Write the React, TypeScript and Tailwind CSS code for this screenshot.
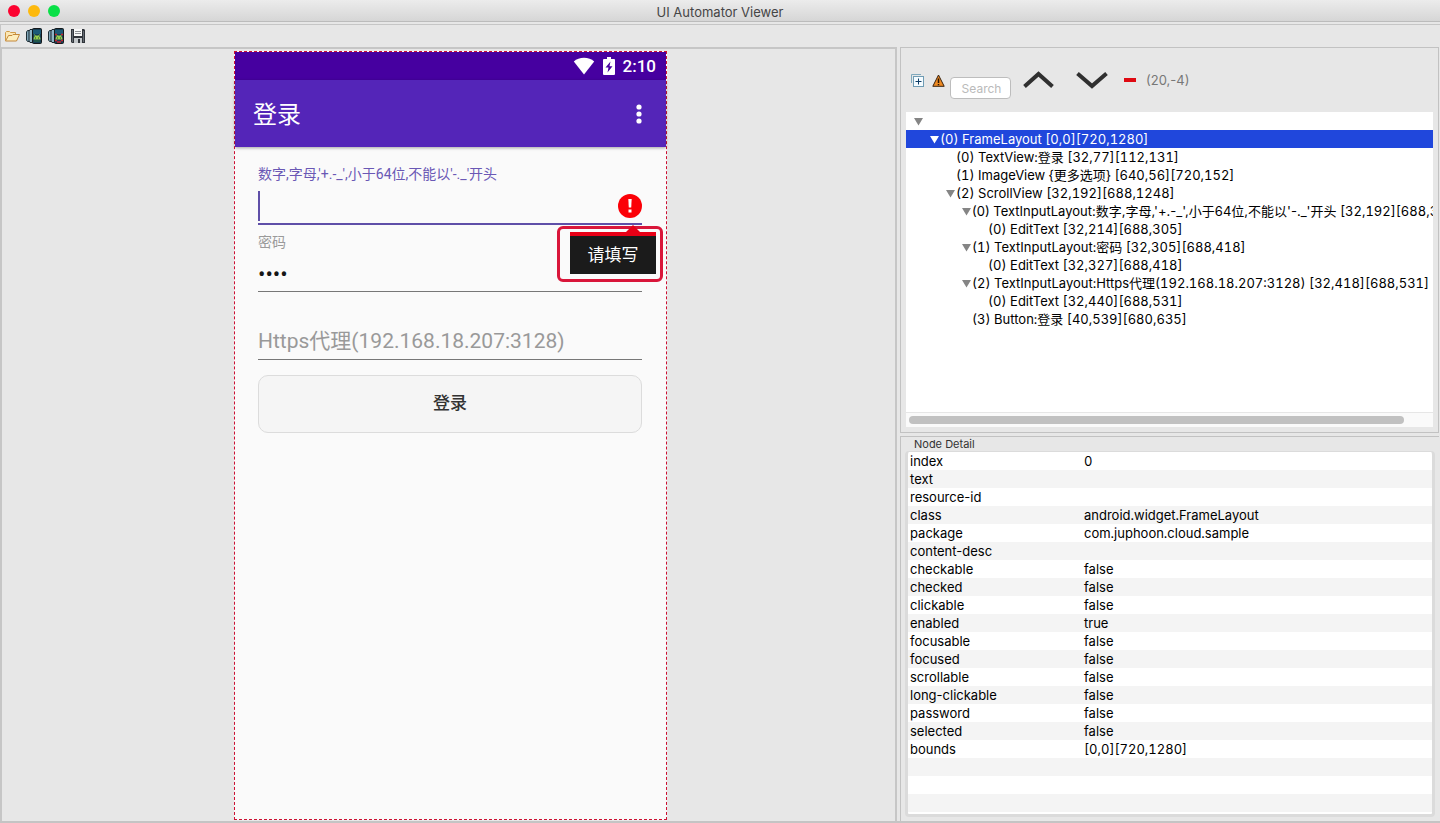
import React from "react";

type TreeNode = {
  name: string;
  bounds: string;
  pad: string;
  open?: boolean;
  selected?: boolean;
  proportional?: boolean;
};

const nodes: TreeNode[] = [
  { name: "", bounds: "", pad: "pl-2", open: true },
  { name: "(0) FrameLayout", bounds: "[0,0][720,1280]", pad: "pl-6", open: true, selected: true },
  { name: "(0) TextView:登录", bounds: "[32,77][112,131]", pad: "pl-10" },
  { name: "(1) ImageView {更多选项}", bounds: "[640,56][720,152]", pad: "pl-10" },
  { name: "(2) ScrollView", bounds: "[32,192][688,1248]", pad: "pl-10", open: true },
  {
    name: "(0) TextInputLayout:数字,字母,'+.-_',小于64位,不能以'-._'开头",
    bounds: "[32,192][688,305]",
    pad: "pl-14",
    open: true,
    proportional: true,
  },
  { name: "(0) EditText", bounds: "[32,214][688,305]", pad: "pl-18" },
  { name: "(1) TextInputLayout:密码", bounds: "[32,305][688,418]", pad: "pl-14", open: true },
  { name: "(0) EditText", bounds: "[32,327][688,418]", pad: "pl-18" },
  { name: "(2) TextInputLayout:Https代理(192.168.18.207:3128)", bounds: "[32,418][688,531]", pad: "pl-14", open: true },
  { name: "(0) EditText", bounds: "[32,440][688,531]", pad: "pl-18" },
  { name: "(3) Button:登录", bounds: "[40,539][680,635]", pad: "pl-14" },
];

const details: [string, string][] = [
  ["index", "0"],
  ["text", ""],
  ["resource-id", ""],
  ["class", "android.widget.FrameLayout"],
  ["package", "com.juphoon.cloud.sample"],
  ["content-desc", ""],
  ["checkable", "false"],
  ["checked", "false"],
  ["clickable", "false"],
  ["enabled", "true"],
  ["focusable", "false"],
  ["focused", "false"],
  ["scrollable", "false"],
  ["long-clickable", "false"],
  ["password", "false"],
  ["selected", "false"],
  ["bounds", "[0,0][720,1280]"],
  ["", ""],
  ["", ""],
  ["", ""],
];

function FolderIcon() {
  return (
    <svg width="16" height="16" viewBox="0 0 16 16">
      <path d="M1.500 12.500V4.500L2.500 3.500H5.500L6.500 4.500H11.500V7" fill="#fbe7b4" stroke="#d09c48" />
      <path d="M1.500 13L4.500 7.500H8L9 6.500H15.500L12.500 13Z" fill="#fdeebd" stroke="#c4883a" strokeLinejoin="round" />
    </svg>
  );
}

function DeviceIcon({ compressed }: { compressed?: boolean }) {
  return (
    <svg width="16" height="16" viewBox="0 0 16 16">
      <path d="M1.500 2.500H4V13.500H1.500L.5 12V4Z" fill="#7fa6b8" stroke="#203038" />
      <path d="M4 1.500H6.500V14.500H4L3 13V3Z" fill="#8db4c6" stroke="#18262e" />
      <rect x="6.500" y=".5" width="9" height="15" rx="1" fill="#173f55" stroke="#15191b" />
      <path d="M7 2H15V6H7Z" fill="#1c5b78" />
      <path d="M7.500 11.500A3.500 4 0 0 1 14.500 11.500Z" fill="#96cf4d" />
      <path d="M8.500 6.500L10 9M13.500 6.500L12 9" stroke="#96cf4d" />
      <path d="M9 10H10M12 10H13" stroke="#24452c" />
      {compressed ? (
        <path d="M7 6.500H9M13 6.500H15M7 12.500H9M13 12.500H15M9 14H13" stroke="#c72532" strokeWidth="1.500" />
      ) : (
        <path d="M8 13H14" stroke="#28733f" />
      )}
    </svg>
  );
}

function SaveIcon() {
  return (
    <svg width="16" height="16" viewBox="0 0 16 16">
      <path d="M1 1H14L15 2V15H2L1 14Z" fill="#30343a" />
      <path d="M2.500 2V14M13.500 3V14" stroke="#656b72" />
      <path d="M4 1H12V8H4Z" fill="#f8f8f8" />
      <path d="M5 3.500H11M5 5.500H11" stroke="#8d9094" />
      <path d="M4 10H12V15H4Z" fill="#c3c7ca" />
      <path d="M8 11H10V15H8Z" fill="#30343a" />
    </svg>
  );
}

function Toggle({ selected }: { selected?: boolean }) {
  return (
    <svg width="9" height="8" viewBox="0 0 9 8" className="shrink-0">
      <path d="M0 0H9L4.500 7.500Z" fill={selected ? "#ffffff" : "#858585"} />
    </svg>
  );
}

function PhoneScreen() {
  return (
    <section
      aria-label="Device screenshot"
      className="flex w-[433px] flex-col border border-dashed border-[#cc1133] bg-[#fafafa] font-[Roboto,'Noto_Sans_CJK_SC',sans-serif]"
    >
      <div className="flex h-7 shrink-0 items-center justify-end bg-[#4600a0] pr-2.5 text-white">
        <svg width="22" height="18" viewBox="0 0 22 18">
          <path d="M11 17.500L.8 4.400C3.500 2 7 .7 11 .7S18.500 2 21.200 4.400Z" fill="#fff" />
        </svg>
        <svg width="12" height="18" viewBox="0 0 12 18" className="ml-2">
          <path d="M4 0H8V2H11Q12 2 12 3V17Q12 18 11 18H1Q0 18 0 17V3Q0 2 1 2H4Z" fill="#fff" />
          <path d="M7.500 4.500L2.500 10.500H5.500L4.500 15.500L9.500 9.200H6.500Z" fill="#4600a0" />
        </svg>
        <span className="ml-2 pt-0.5 text-[17px] font-medium">2:10</span>
      </div>
      <header className="flex h-[67px] shrink-0 items-center justify-between bg-[#5425b8] pr-5 pl-[18px] text-white shadow-[0_1px_3px_rgba(0,0,0,0.35)]">
        <h1 className="pt-0.5 text-2xl">登录</h1>
        <button type="button" aria-label="更多选项">
          <svg width="14" height="22" viewBox="0 0 14 22">
            <circle cx="7" cy="4" r="2.600" fill="#fff" />
            <circle cx="7" cy="11" r="2.600" fill="#fff" />
            <circle cx="7" cy="18" r="2.600" fill="#fff" />
          </svg>
        </button>
      </header>
      <form className="flex flex-col pt-4 pr-6 pl-[23px]" onSubmit={(e) => e.preventDefault()}>
        <label htmlFor="account" className="h-[22px] text-sm leading-[22px] whitespace-nowrap text-[#6a58b5]">
          数字,字母,'+.-_',小于64位,不能以'-._'开头
        </label>
        <div className="relative flex h-10 items-center border-b-2 border-[#5f4fa8] pt-1">
          <span className="h-[30px] w-0.5 bg-[#5f4fa8]" />
          <input id="account" className="min-w-0 flex-1 bg-transparent text-[21px] outline-none" />
          <svg width="24" height="24" viewBox="0 0 24 24">
            <circle cx="12" cy="12" r="12" fill="#fb0007" />
            <path d="M10.300 5H13.700L13.200 13.500H10.800Z" fill="#fff" />
            <rect x="10.500" y="15.500" width="3" height="3" fill="#fff" />
          </svg>
          <div className="absolute top-[41px] -right-[21px] rounded-md border-[3px] border-[#d9163a] bg-[#fafafa] pt-[3px] pr-1 pb-[5px] pl-[10px]">
            <svg width="14" height="7" viewBox="0 0 14 7" className="absolute -top-1 right-5">
              <path d="M7 0L14 7H0Z" fill="#e80016" />
            </svg>
            <p className="w-[86px] border-t-4 border-[#e80016] bg-[#1b1b1b] text-center text-[17px] leading-[38px] text-white">
              请填写
            </p>
          </div>
        </div>
        <label htmlFor="secret" className="mt-1.5 h-[22px] text-sm leading-[22px] text-[#9a9a9a]">
          密码
        </label>
        <input
          id="secret"
          type="password"
          defaultValue="1234"
          className="h-[39px] border-b border-[#777] bg-transparent pt-1 text-[22px] text-[#161616] outline-none"
        />
        <input
          aria-label="Https代理"
          placeholder="Https代理(192.168.18.207:3128)"
          className="mt-7 h-10 border-b border-[#777] bg-transparent pt-0.5 text-[21px] outline-none placeholder:text-[#999]"
        />
        <button
          type="submit"
          className="mt-[15px] h-[58px] rounded-[10px] border border-[#dcdcdc] bg-[#f5f5f5] text-[17px] font-medium text-[#333]"
        >
          登录
        </button>
      </form>
    </section>
  );
}

export default function App() {
  return (
    <div className="flex h-screen flex-col overflow-hidden border-b-2 border-[#c4c4c4] bg-[#e7e7e7] font-[Inter,'Noto_Sans_CJK_SC',sans-serif] text-[13px] text-black">
      <header className="grid h-[22px] shrink-0 grid-cols-[1fr_auto_1fr] items-center border-b border-[#bcbcbc] bg-linear-to-b from-[#ececec] to-[#d6d6d6] px-2">
        <div className="flex gap-2">
          <button type="button" aria-label="Close" className="size-3 rounded-full bg-[#fc0330]" />
          <button type="button" aria-label="Minimize" className="size-3 rounded-full bg-[#fdb90d]" />
          <button type="button" aria-label="Zoom" className="size-3 rounded-full bg-[#09e047]" />
        </div>
        <h1 className="pt-0.5 text-[13px] leading-5 text-[#454545]">UI Automator Viewer</h1>
      </header>

      <div role="toolbar" className="mt-0.5 flex h-[23px] shrink-0 items-center gap-1.5 border-t border-l border-[#c6c6c6] pl-[3px]">
        <button type="button" aria-label="Open"><FolderIcon /></button>
        <button type="button" aria-label="Device Screenshot"><DeviceIcon /></button>
        <button type="button" aria-label="Compressed Screenshot"><DeviceIcon compressed /></button>
        <button type="button" aria-label="Save"><SaveIcon /></button>
      </div>

      <main className="grid min-h-0 flex-1 grid-cols-[897fr_539fr] gap-[3px] pr-px">
        <div className="flex min-h-0 justify-center border-t-2 border-r-2 border-l-2 border-[#c6c6c6] pt-0.5 pr-2 pb-px pl-3">
          <PhoneScreen />
        </div>

        <div className="flex min-h-0 min-w-0 flex-col gap-[3px]">
          <section className="flex h-[386px] shrink-0 flex-col border border-[#c2c2c2] px-[5px] pb-[5px]">
            <div className="flex h-16 shrink-0 items-center pl-1">
              <button type="button" aria-label="Expand All">
                <svg width="14" height="14" viewBox="0 0 14 14">
                  <path d="M1.500 10V1.500H11" fill="none" stroke="#7fa9bd" />
                  <rect x="3.500" y="3.500" width="10" height="10" fill="#f4fbff" stroke="#6f9cb4" />
                  <path d="M8.500 5.500V11.500M5.500 8.500H11.500" stroke="#0d3c66" />
                </svg>
              </button>
              <button type="button" aria-label="Toggle NAF Nodes" className="ml-2">
                <svg width="13" height="13" viewBox="0 0 13 13">
                  <path d="M6.500 1L12.200 12.300H.8Z" fill="#ef8a22" stroke="#39220f" />
                  <path d="M6.500 4.500V9M6.500 10V11.300" stroke="#291400" strokeWidth="1.500" />
                </svg>
              </button>
              <input
                aria-label="Search"
                placeholder="Search"
                className="mt-4 ml-[5px] h-[22px] w-[61px] rounded border border-[#bdbdbd] bg-white pl-0.5 text-center text-xs outline-none placeholder:text-[#bababa]"
              />
              <button type="button" aria-label="Previous" className="ml-3">
                <svg width="31" height="18" viewBox="0 0 31 18">
                  <path d="M1.500 15.500L15.500 3L29.500 15.500" fill="none" stroke="#303030" strokeWidth="4" />
                </svg>
              </button>
              <button type="button" aria-label="Next" className="ml-[22px]">
                <svg width="32" height="18" viewBox="0 0 32 18">
                  <path d="M1.500 2.500L16 15L30.500 2.500" fill="none" stroke="#303030" strokeWidth="4" />
                </svg>
              </button>
              <button type="button" aria-label="Clear" className="ml-4 h-1 w-3 bg-[#df0a12]" />
              <span className="ml-2.5 pt-0.5 text-[#777]">(20,-4)</span>
            </div>
            <div className="flex min-h-0 flex-1 flex-col bg-white">
              <ul role="tree" className="min-h-0 flex-1 overflow-hidden">
                {nodes.map((n, i) => (
                  <li
                    key={i}
                    role="treeitem"
                    aria-selected={!!n.selected}
                    className={`flex h-[18px] items-center gap-px pt-px whitespace-nowrap ${n.pad} ${
                      n.selected ? "bg-[#2047dc] text-white" : ""
                    }`}
                  >
                    {n.open ? <Toggle selected={n.selected} /> : <span className="w-[9px]" />}
                    <span className="tabular-nums">
                      <span className={n.proportional ? "proportional-nums" : ""}>{n.name}</span> {n.bounds}
                    </span>
                  </li>
                ))}
              </ul>
              <div className="flex h-[15px] shrink-0 items-center border-t border-[#e6e6e6] bg-[#fafafa] px-[3px]">
                <div className="h-2 w-[95%] rounded-full bg-[#c1c1c1]" />
              </div>
            </div>
          </section>

          <section className="flex min-h-0 flex-1 flex-col border-t border-l border-[#c2c2c2] pr-1 pb-1 pl-1">
            <h2 className="h-[14px] shrink-0 pl-[9px] text-[11px] leading-[15px] text-[#333]">Node Detail</h2>
            <div className="min-h-0 flex-1 overflow-hidden rounded border-x-[3px] border-t border-b-[3px] border-[#dbdbdb] bg-white">
              <table className="w-full table-fixed border-collapse">
                <tbody>
                  {details.map(([k, v], i) => (
                    <tr key={i} className="h-[18px] leading-[18px] even:bg-[#f4f4f4]">
                      <th scope="row" className="w-[174px] p-0 pl-0.5 text-left font-normal">{k}</th>
                      <td className="p-0 pl-0.5 tabular-nums">{v}</td>
                    </tr>
                  ))}
                </tbody>
              </table>
            </div>
          </section>
        </div>
      </main>
    </div>
  );
}
